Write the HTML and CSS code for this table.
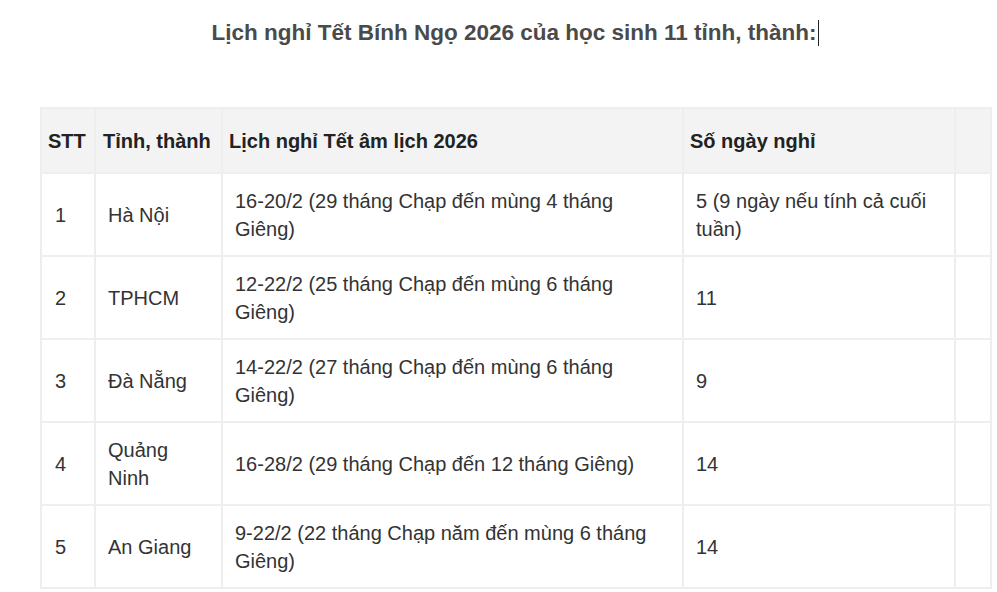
FILE: index.html
```html
<!DOCTYPE html>
<html lang="vi">
<head>
<meta charset="utf-8">
<title>Lịch nghỉ Tết Bính Ngọ 2026</title>
<link rel="stylesheet" href="styles.css">
</head>
<body>
<div class="article">
  <h2 class="title">Lịch nghỉ Tết Bính Ngọ 2026 của học sinh 11 tỉnh, thành:<span class="caret"></span></h2>
  <table class="schedule">
    <colgroup>
      <col class="c-stt">
      <col class="c-prov">
      <col class="c-dates">
      <col class="c-days">
      <col class="c-extra">
    </colgroup>
    <thead>
      <tr>
        <th>STT</th>
        <th>Tỉnh, thành</th>
        <th class="wide">Lịch nghỉ Tết âm lịch 2026</th>
        <th class="wide">Số ngày nghỉ</th>
        <th></th>
      </tr>
    </thead>
    <tbody>
      <tr>
        <td>1</td>
        <td>Hà Nội</td>
        <td>16-20/2 (29 tháng Chạp đến mùng 4 tháng Giêng)</td>
        <td>5 (9 ngày nếu tính cả cuối tuần)</td>
        <td></td>
      </tr>
      <tr>
        <td>2</td>
        <td>TPHCM</td>
        <td>12-22/2 (25 tháng Chạp đến mùng 6 tháng Giêng)</td>
        <td>11</td>
        <td></td>
      </tr>
      <tr>
        <td>3</td>
        <td>Đà Nẵng</td>
        <td>14-22/2 (27 tháng Chạp đến mùng 6 tháng Giêng)</td>
        <td>9</td>
        <td></td>
      </tr>
      <tr>
        <td>4</td>
        <td>Quảng Ninh</td>
        <td>16-28/2 (29 tháng Chạp đến 12 tháng Giêng)</td>
        <td>14</td>
        <td></td>
      </tr>
      <tr>
        <td>5</td>
        <td>An Giang</td>
        <td>9-22/2 (22 tháng Chạp năm đến mùng 6 tháng Giêng)</td>
        <td>14</td>
        <td></td>
      </tr>
    </tbody>
  </table>
</div>
</body>
</html>
```

FILE: styles.css
```css
html, body {
  margin: 0;
  padding: 0;
  background: #ffffff;
}

body {
  font-family: "Liberation Sans", Arial, sans-serif;
  color: #333333;
}

.article {
  width: 950px;
  margin-left: 40px;
}

.title {
  margin: 0;
  padding-top: 19px;
  height: 107px;
  box-sizing: border-box;
  text-align: center;
  font-size: 22.5px;
  line-height: 28px;
  font-weight: bold;
  color: #4a4a4a;
}

.caret {
  display: inline-block;
  width: 1px;
  height: 26px;
  background: #222;
  vertical-align: -6px;
  margin-left: 1px;
}

.schedule {
  width: 950px;
  border-collapse: collapse;
  table-layout: fixed;
  font-size: 20px;
  line-height: 28px;
}

.c-stt { width: 54px; }
.c-prov { width: 127px; }
.c-dates { width: 461px; }
.c-days { width: 272px; }
.c-extra { width: 36px; }

.schedule th,
.schedule td {
  border: 2px solid #eeeeee;
  vertical-align: middle;
  text-align: left;
}

.schedule th {
  background: #f3f3f3;
  font-weight: bold;
  color: #222222;
  padding: 18px 7px 17px 6px;
}

.schedule th + th {
  padding-left: 7px;
}

.schedule th.wide {
  padding-left: 6px;
}

.schedule td {
  padding: 13px 13px 12px 12px;
  color: #333333;
}

.schedule td:first-child {
  padding-left: 13px;
}
```
